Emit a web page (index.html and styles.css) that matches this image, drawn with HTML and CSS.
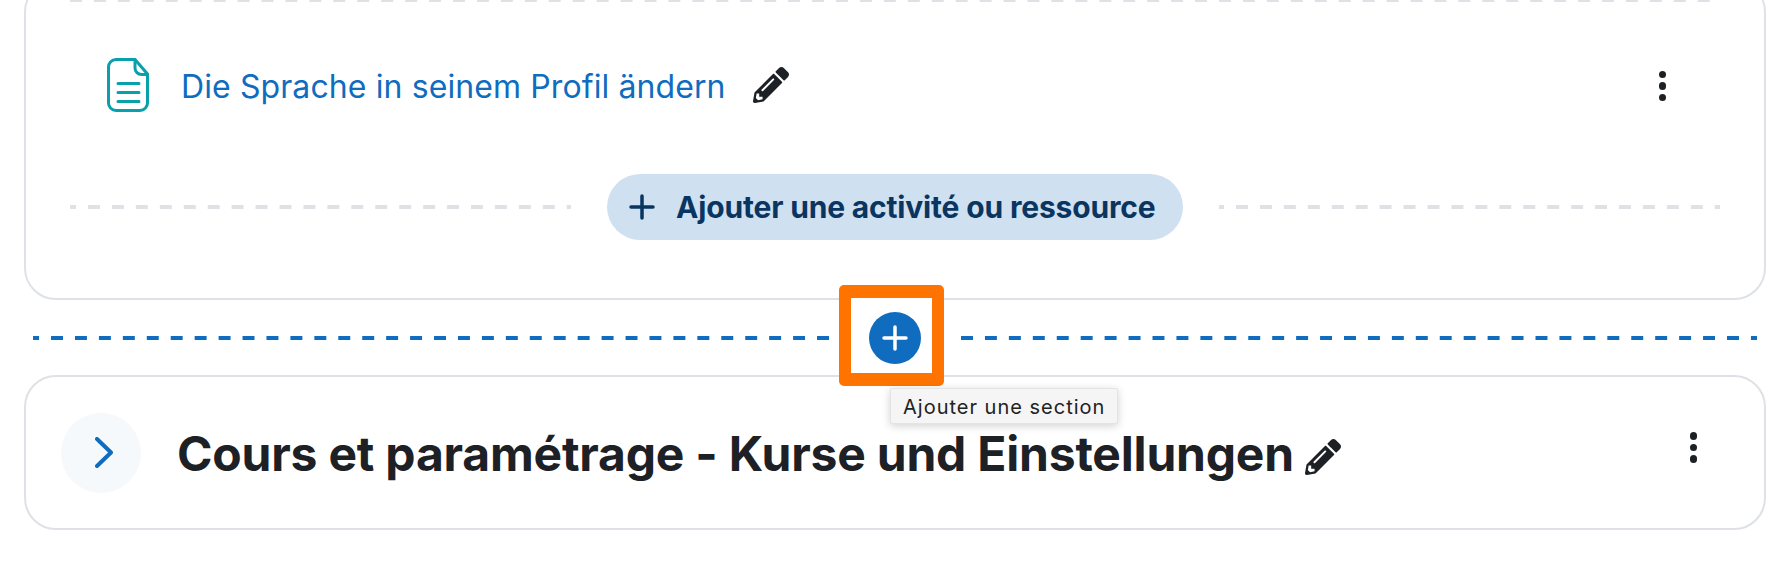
FILE: index.html
```html
<!DOCTYPE html>
<html lang="fr">
<head>
<meta charset="utf-8">
<title>Cours et paramétrage</title>
<link rel="stylesheet" href="styles.css">
</head>
<body>
<div class="page">

  <div class="card card-activity">
    <div class="dash dash-top"></div>
    <div class="activity">
      <svg class="doc-icon" viewBox="0 0 42 54" width="42" height="54" fill="none" stroke="#08a0ab" stroke-width="3" stroke-linecap="round" stroke-linejoin="round">
        <path d="M9 1.5h19L40.500 16v29a7.500 7.500 0 0 1-7.500 7.500H9A7.500 7.500 0 0 1 1.500 45V9A7.500 7.500 0 0 1 9 1.500z"/>
        <path d="M28 1.500V10a6.500 6.500 0 0 0 6.500 6.500h6"/>
        <path d="M11 25.500h21M11 34.500h21M11 43.500h21"/>
      </svg>
      <a class="activity-link" href="#">Die Sprache in seinem Profil ändern</a>
      <svg class="pencil pencil-big" viewBox="0 0 512 512"><use href="#pencil-shape"/></svg>
      <div class="kebab kebab-activity"><span></span><span></span><span></span></div>
    </div>
    <div class="add-row">
      <div class="dash dash-left"></div>
      <a class="add-btn" href="#">
        <svg viewBox="0 0 26 26" width="26" height="26" fill="none" stroke="#0a3560" stroke-width="3.500" stroke-linecap="round"><path d="M13 2v22M2 13h22"/></svg>
        Ajouter une activité ou ressource
      </a>
      <div class="dash dash-right"></div>
    </div>
  </div>

  <div class="section-add">
    <div class="blue-dash blue-left"></div>
    <div class="section-add-middle">
      <div class="frame"></div>
      <a class="circle-btn" href="#">
        <svg viewBox="0 0 26 26" width="26" height="26" fill="none" stroke="#fff" stroke-width="3.500" stroke-linecap="round"><path d="M13 2v22M2 13h22"/></svg>
      </a>
      <div class="tip">Ajouter une section</div>
    </div>
    <div class="blue-dash blue-right"></div>
  </div>

  <div class="card card-section">
    <div class="toggle">
      <svg viewBox="0 0 18 31" width="18" height="31" fill="none" stroke="#0f6cbf" stroke-width="4" stroke-linecap="round" stroke-linejoin="round"><path d="M2 2l14 13.500L2 29"/></svg>
    </div>
    <h3 class="section-title">Cours et paramétrage - Kurse und Einstellungen</h3>
    <svg class="pencil pencil-small" viewBox="0 0 512 512"><use href="#pencil-shape"/></svg>
    <div class="kebab kebab-section"><span></span><span></span><span></span></div>
  </div>

</div>

<svg class="defs" width="0" height="0">
  <defs>
    <path id="pencil-shape" d="M497.900 142.100l-46.100 46.100c-4.700 4.700-12.300 4.700-17 0l-111-111c-4.700-4.700-4.700-12.300 0-17l46.100-46.100c18.700-18.700 49.100-18.700 67.900 0l60.100 60.100c18.800 18.700 18.800 49.100 0 67.900zM284.200 99.800L21.600 362.400.4 483.900c-2.900 16.400 11.400 30.600 27.800 27.800l121.500-21.300 262.600-262.600c4.700-4.700 4.700-12.300 0-17l-111-111c-4.800-4.700-12.400-4.700-17.100 0zM124.100 339.900c-5.500-5.500-5.500-14.300 0-19.800l154-154c5.500-5.500 14.300-5.500 19.800 0s5.500 14.300 0 19.800l-154 154c-5.500 5.500-14.300 5.500-19.800 0zM88 424h48v36.300l-64.500 11.300-31.100-31.100L51.700 376H88v48z"/>
  </defs>
</svg>
</body>
</html>
```

FILE: styles.css
```css
body
{
	margin: 0;
	background: #fff;
	font-family: "Inter", "Liberation Sans", sans-serif;
	color: #1d2125;
}
a
{
	text-decoration: none;
}
.defs
{
	display: block;
}
.page
{
	height: 562px;
	overflow: hidden;
	padding: 0 24px;
}
.card
{
	border: 2px solid #dee2e6;
	border-radius: 32px;
	background: #fff;
}

/* first card, cut by the top of the window */
.card-activity
{
	margin-top: -20px;
	padding: 16px 44px 58px;
}
.dash
{
	height: 4px;
	background-image: linear-gradient(to right, #dee2e6 50%, transparent 50%);
	background-size: 23.940px 4px;
}
.dash-left
{
	background-position: 18px 0;
}
.dash-right
{
	background-position: 17px 0;
}
.activity
{
	display: flex;
	align-items: center;
	height: 166px;
	margin-bottom: 6px;
	padding: 0 54px 0 37px;
}
.doc-icon
{
	flex: none;
}
.activity-link
{
	margin: 2px 27px 0 32px;
	font-size: 32px;
	letter-spacing: .1px;
	color: #0f6cbf;
}
.pencil
{
	flex: none;
	fill: #1d2125;
}
.pencil-big
{
	width: 36px;
	height: 36px;
}
.pencil-small
{
	width: 36px;
	height: 36px;
	margin: 9px 0 0 11px;
}
.kebab
{
	display: flex;
	flex-direction: column;
	gap: 4px;
	margin-left: auto;
}
.kebab span
{
	width: 7.500px;
	height: 7.500px;
	border-radius: 50%;
	background: #1d2125;
}
.kebab-activity
{
	margin-top: 2px;
}
.add-row
{
	display: flex;
	align-items: center;
	gap: 36px;
}
.add-row .dash
{
	flex: 1;
}
.add-btn
{
	display: flex;
	align-items: center;
	gap: 21px;
	box-sizing: border-box;
	width: 576px;
	height: 66px;
	padding-left: 22px;
	border-radius: 33px;
	background: #cfe0f1;
	color: #0a3560;
	font-size: 30px;
	font-weight: 700;
	letter-spacing: -.17px;
	white-space: nowrap;
}

/* dashed line with the add section button */
.section-add
{
	display: flex;
	align-items: center;
	height: 75px;
	padding: 0 9px;
}
.blue-dash
{
	flex: 1;
	height: 4px;
	background-image: linear-gradient(to right, #0f6cbf 50%, transparent 50%);
	background-size: 23.940px 4px;
}
.blue-left
{
	background-image: linear-gradient(to right, transparent 50%, #0f6cbf 50%);
	background-position: right 0 top 0;
}
.section-add-middle
{
	position: relative;
	display: flex;
	align-items: center;
	justify-content: center;
	width: 132px;
	height: 75px;
}
.frame
{
	position: absolute;
	left: 10px;
	top: -15px;
	box-sizing: border-box;
	width: 105px;
	height: 101px;
	border: solid #ff7300;
	border-width: 13px 12px;
	border-radius: 5px;
	background: #fff;
}
.circle-btn
{
	position: relative;
	display: flex;
	align-items: center;
	justify-content: center;
	width: 52px;
	height: 52px;
	border-radius: 50%;
	background: #0f6cbf;
}
.tip
{
	position: absolute;
	left: 61px;
	top: 88px;
	z-index: 2;
	padding: 0 12px;
	height: 36px;
	line-height: 36px;
	box-sizing: border-box;
	border: 1px solid #e4e4e4;
	border-radius: 2px;
	background: #f5f5f5;
	box-shadow: 0 2px 8px rgba(0,0,0,.18);
	color: #222;
	font-size: 20px;
	letter-spacing: 1px;
	white-space: nowrap;
}

/* collapsed section */
.card-section
{
	display: flex;
	align-items: center;
	height: 155px;
	box-sizing: border-box;
	padding: 0 67px 0 35px;
}
.toggle
{
	display: flex;
	align-items: center;
	justify-content: center;
	flex: none;
	width: 80px;
	height: 80px;
	margin-right: 36px;
	border-radius: 50%;
	background: #f5f9fc;
}
.toggle svg
{
	margin-left: 5px;
}
.section-title
{
	margin: 2px 0 0;
	font-size: 48px;
	font-weight: 700;
	letter-spacing: -.2px;
	white-space: nowrap;
}
.kebab-section
{
	margin-bottom: 10px;
}
```
